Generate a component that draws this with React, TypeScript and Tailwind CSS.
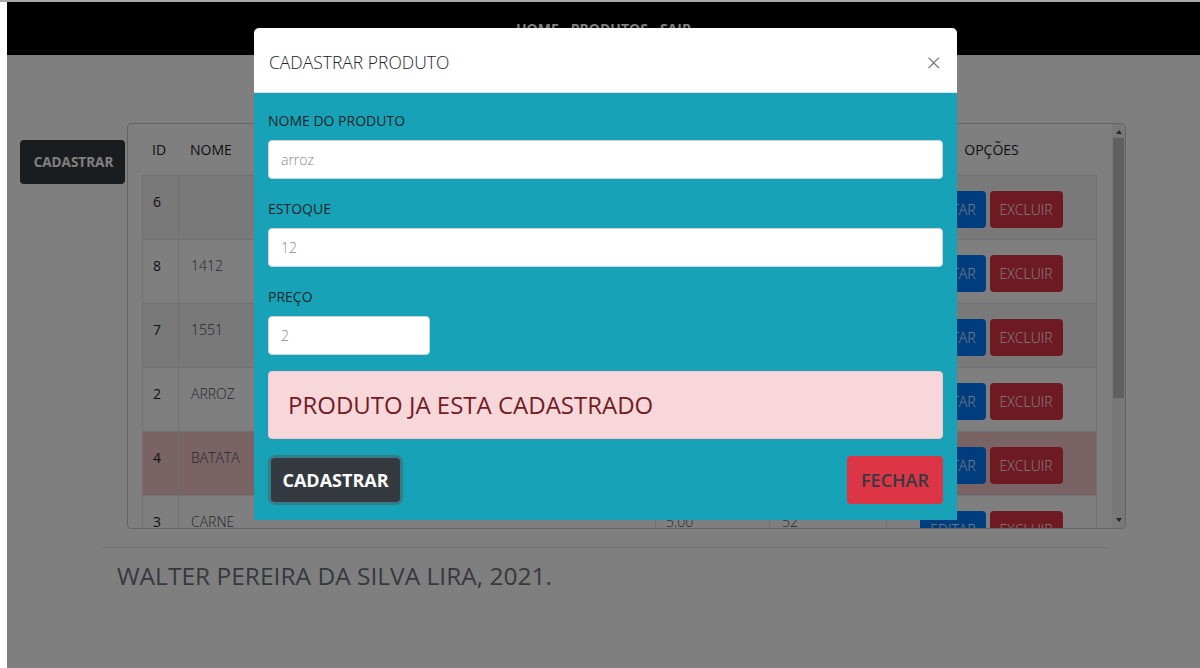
import React from 'react';

type Produto = { id: number; nome: string; preco: string; estoque: string; danger?: boolean };

const produtos: Produto[] = [
  { id: 6, nome: '', preco: '1.00', estoque: '1' },
  { id: 8, nome: '1412', preco: '2.00', estoque: '12' },
  { id: 7, nome: '1551', preco: '3.00', estoque: '20' },
  { id: 2, nome: 'ARROZ', preco: '2.00', estoque: '12' },
  { id: 4, nome: 'BATATA', preco: '4.00', estoque: '8', danger: true },
  { id: 3, nome: 'CARNE', preco: '5.00', estoque: '52' },
];

const cols = 'grid grid-cols-[36px_477px_114px_117px_211px]';

function Row({ p, index }: { p: Produto; index: number }) {
  const bg = p.danger ? 'bg-[#f5c6cb]' : index % 2 === 0 ? 'bg-[#f2f2f2]' : 'bg-white';
  return (
    <div className={`${cols} ${bg} h-[64px] shrink-0 border-t border-[#dee2e6] text-[14px]`}>
      <div className="border-l border-[#dee2e6] pl-[10px] pt-[15px] font-medium text-[#212529]">{p.id}</div>
      <div className="border-l border-[#dee2e6] pl-[12px] pt-[15px] font-light text-[#495057]">{p.nome}</div>
      <div className="border-l border-[#dee2e6] pl-[10px] pt-[15px] font-light text-[#495057]">{p.preco}</div>
      <div className="border-l border-[#dee2e6] pl-[12px] pt-[15px] font-light text-[#495057]">{p.estoque}</div>
      <div className="flex justify-center gap-[4px] border-x border-[#dee2e6] pt-[15px]">
        <button className="h-[37px] rounded-[4px] bg-[#007bff] px-[10px] font-light text-white">EDITAR</button>
        <button className="h-[37px] rounded-[4px] bg-[#dc3545] px-[10px] font-light text-white">EXCLUIR</button>
      </div>
    </div>
  );
}

function Campo({ label, value, width }: { label: string; value: string; width?: string }) {
  return (
    <div className="mb-[19px]">
      <div className="mb-[9px] h-[21px] text-[14px] leading-[21px] font-medium text-[#212529]">{label}</div>
      <div
        className={`${width ?? 'w-full'} flex h-[39px] items-center rounded-[4px] border border-[#ced4da] bg-white pl-[12px] text-[14px] font-light text-[#8a8a8a]`}
      >
        {value}
      </div>
    </div>
  );
}

export default function App() {
  return (
    <div className="h-[668px] w-[1200px] overflow-hidden border-t-2 border-[#a8a8a8] bg-white font-['Open_Sans','Noto_Sans',sans-serif]">
      <div className="flex h-full">
        <div className="w-[7px] shrink-0 bg-white" />
        <div className="relative flex-1 bg-white">
          {/* navbar */}
          <nav className="flex h-[53px] justify-center gap-[12px] bg-black pt-[16px] text-[14px] font-bold text-white">
            <span>HOME</span>
            <span>PRODUTOS</span>
            <span>SAIR</span>
          </nav>

          {/* content */}
          <div className="mt-[68px] flex items-start">
            <button className="ml-[13px] mt-[17px] h-[44px] w-[105px] rounded-[4px] bg-[#343a40] pl-[2px] text-[13.5px] font-bold text-white">
              CADASTRAR
            </button>
            <div className="ml-[2px] flex h-[406px] w-[999px] overflow-hidden rounded-[4px] border border-[#c8c8c8] bg-white">
              <div className="w-[14px] shrink-0" />
              <div className="flex w-[955px] shrink-0 flex-col">
                <div className={`${cols} h-[51px] shrink-0 items-center text-[14px] font-medium text-[#212529]`}>
                  <div className="pl-[10px]">ID</div>
                  <div className="pl-[12px]">NOME</div>
                  <div className="pl-[10px]">PREÇO</div>
                  <div className="pl-[12px]">ESTOQUE</div>
                  <div className="text-center">OPÇÕES</div>
                </div>
                {produtos.map((p, i) => (
                  <Row key={p.id} p={p} index={i} />
                ))}
              </div>
              <div className="w-[15px] shrink-0" />
              {/* scrollbar */}
              <div className="flex w-[13px] shrink-0 flex-col items-center bg-[#f1f1f1]">
                <svg width="8" height="14" viewBox="0 0 8 14" className="shrink-0">
                  <polygon points="4,6 7,10 1,10" fill="#505050" />
                </svg>
                <div className="h-[260px] w-[11px] bg-[#c1c1c1]" />
                <div className="flex-1" />
                <svg width="8" height="14" viewBox="0 0 8 14" className="shrink-0">
                  <polygon points="1,4 7,4 4,8" fill="#505050" />
                </svg>
              </div>
            </div>
          </div>

          <div className="ml-[96px] mt-[18px] w-[1005px] border-t border-[#e4e4e4] pl-[14px] pt-[10px] text-[24.5px] text-[#6c757d]">
            WALTER PEREIRA DA SILVA LIRA, 2021.
          </div>

          {/* backdrop */}
          <div className="absolute inset-0 bg-black/50" />

          {/* modal */}
          <div className="absolute left-[247px] top-[26px] w-[703px] overflow-hidden rounded-t-[5px]">
            <div className="flex h-[65px] items-center justify-between border-b border-[#dee2e6] bg-white pl-[15px] pr-[16px] pt-[4px]">
              <span className="text-[17.5px] font-light text-[#212529]">CADASTRAR PRODUTO</span>
              <span className="text-[26px] font-light leading-none text-[#6c757d]">×</span>
            </div>
            <div className="bg-[#17a2b8] px-[14px] pb-[15px] pt-[17px]">
              <Campo label="NOME DO PRODUTO" value="arroz" />
              <Campo label="ESTOQUE" value="12" />
              <Campo label="PREÇO" value="2" width="w-[162px]" />
              <div className="-mt-[3px] flex h-[68px] items-center rounded-[4px] border border-[#f5c6cb] bg-[#f8d7da] pl-[19px] text-[24px] text-[#721c24]">
                PRODUTO JA ESTA CADASTRADO
              </div>
              <div className="mt-[16px] flex h-[50px] items-center justify-between">
                <button className="ml-[3px] h-[44px] w-[129px] rounded-[4px] bg-[#343a40] text-[18px] font-bold text-white shadow-[0_0_0_3px_rgba(82,88,93,0.5)]">
                  CADASTRAR
                </button>
                <button className="h-[48px] w-[96px] rounded-[4px] bg-[#dc3545] text-[18px] font-semibold text-[#343a40]">
                  FECHAR
                </button>
              </div>
            </div>
          </div>
        </div>
      </div>
    </div>
  );
}
